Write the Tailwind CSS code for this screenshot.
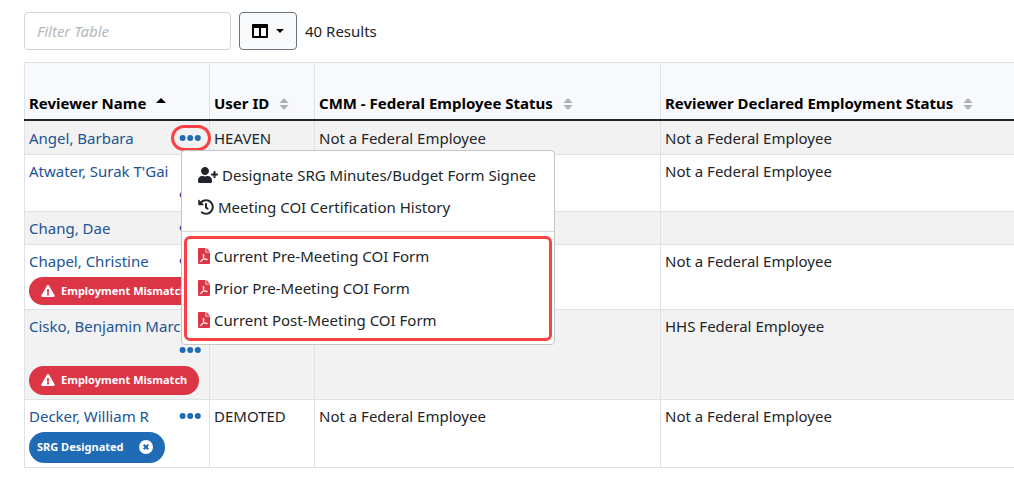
<!DOCTYPE html>
<html lang="en">
<head>
    <meta charset="UTF-8">
    <meta name="viewport" content="width=device-width, initial-scale=1.0">
    <title>Reviewers</title>
    <!-- Tailwind CSS CDN -->
    <script src="https://cdn.jsdelivr.net/npm/@tailwindcss/browser@4"></script>
</head>
<body class="bg-white text-[#212529] text-[15px] leading-6 font-['Noto_Sans',sans-serif] overflow-x-hidden">

    <!-- Shared icons -->
    <svg class="hidden">
        <symbol id="dots" viewBox="0 0 22 6">
            <circle cx="3.600" cy="3" r="3"/><circle cx="11.200" cy="3" r="3"/><circle cx="18.800" cy="3" r="3"/>
        </symbol>
        <symbol id="sort" viewBox="0 0 10 12">
            <path d="M5 0 9.500 5H0.500zM5 12 0.500 7H9.500z"/>
        </symbol>
        <symbol id="warning" viewBox="0 0 576 512">
            <path d="M569.517 440.013C587.975 472.007 564.806 512 527.94 512H48.054c-36.937 0-59.999-40.055-41.577-71.987L246.423 23.985c18.467-32.009 64.72-31.951 83.154 0l239.94 416.028zM288 354c-25.405 0-46 20.595-46 46s20.595 46 46 46 46-20.595 46-46-20.595-46-46-46zm-43.673-165.346l7.418 136c.347 6.364 5.609 11.346 11.982 11.346h48.546c6.373 0 11.635-4.982 11.982-11.346l7.418-136c.375-6.874-5.098-12.654-11.982-12.654h-63.383c-6.884 0-12.356 5.78-11.981 12.654z"/>
        </symbol>
        <symbol id="pdf" viewBox="0 0 12 16">
            <path d="M1 0h6.500v4.500H12V15a1 1 0 0 1-1 1H1a1 1 0 0 1-1-1V1a1 1 0 0 1 1-1zM8.300 0 12 3.700H8.300z"/>
            <path d="M5.400 6.200c.900 0 .600 2 .100 3.400-.700 1.900-1.700 3.800-2.600 4.200-.800.300-1-.600 0-1.300 1.600-1.100 4-1.700 5.600-1.600 1.500.100 1.200 1.200.100.900C7 11.500 5.600 10 5.200 8.300c-.200-1-.200-2.100.200-2.100z" fill="none" stroke="#fff" stroke-width="0.900"/>
        </symbol>
    </svg>

    <main class="pl-6 pt-3">
        <div class="flex items-center gap-2">
            <input type="text" aria-label="Filter Table" placeholder="Filter Table" class="w-[207px] h-[38px] px-3 border border-[#ced4da] rounded bg-white placeholder:italic placeholder:text-[#b5b8bb]">
            <button type="button" aria-label="Columns" class="flex items-center justify-center gap-2 w-[58px] h-[38px] border border-[#6c757d] rounded bg-[#f8f9fa]">
                <svg class="w-4 h-[14px]" viewBox="0 0 16 14"><path fill="#000" fill-rule="evenodd" d="M1 0h14a1 1 0 0 1 1 1v12a1 1 0 0 1-1 1H1a1 1 0 0 1-1-1V1a1 1 0 0 1 1-1zM2 4v8h5V4zM9 4v8h5V4z"/></svg>
                <svg class="w-2 h-1" viewBox="0 0 8 4"><path fill="#000" d="M0 0h8L4 4z"/></svg>
            </button>
            <span>40 Results</span>
        </div>

        <table class="mt-3 w-full table-fixed border-collapse border border-r-0 border-[#dee2e6]">
            <colgroup>
                <col class="w-[185px]">
                <col class="w-[105px]">
                <col class="w-[346px]">
                <col>
            </colgroup>
            <thead class="bg-[#f8f9fc] text-black text-left align-bottom">
                <tr class="h-[57px] border-b-2 border-[#212529]">
                    <th class="px-1 pb-1 border-r border-r-[#dee2e6] whitespace-nowrap">
                        Reviewer Name
                        <svg class="inline-block ml-1.5 mb-2 w-[10px] h-[5px]" viewBox="0 0 10 5"><path d="M5 0l5 5H0z"/></svg>
                    </th>
                    <th class="px-1 pb-1 border-r border-r-[#dee2e6] whitespace-nowrap">
                        User ID
                        <svg class="inline-block ml-1.5 w-[10px] h-3 fill-[#adb0b3]"><use href="#sort"/></svg>
                    </th>
                    <th class="px-1 pb-1 border-r border-r-[#dee2e6] whitespace-nowrap">
                        CMM - Federal Employee Status
                        <svg class="inline-block ml-1.5 w-[10px] h-3 fill-[#adb0b3]"><use href="#sort"/></svg>
                    </th>
                    <th class="px-1 pb-1 whitespace-nowrap">
                        Reviewer Declared Employment Status
                        <svg class="inline-block ml-1.5 w-[10px] h-3 fill-[#adb0b3]"><use href="#sort"/></svg>
                    </th>
                </tr>
            </thead>
            <tbody class="align-top">
                <tr class="bg-[#f2f2f2] border-b border-[#dee2e6]">
                    <td class="p-1 pt-[5px] border-r border-[#dee2e6]">
                        <div class="relative flex flex-wrap justify-between gap-x-3">
                            <a href="#" class="text-[#205493]">Angel, Barbara</a>
                            <button type="button" aria-label="Actions for Angel, Barbara" class="relative flex items-center h-6 px-1">
                                <svg class="w-[22px] h-[6px] fill-[#1f6bb5]"><use href="#dots"/></svg>
                                <span class="absolute -left-1 -right-1.5 -inset-y-px border-3 border-[#fb4144] rounded-full"></span>
                            </button>

                            <!-- Actions menu -->
                            <div class="absolute z-10 top-6 left-[152px] w-[374px] pt-2 pb-[3px] bg-white border border-[#c4c5c7] rounded text-[#212529] whitespace-nowrap">
                                <a href="#" class="flex items-center gap-1 h-8 px-4">
                                    <svg class="w-5 h-4" viewBox="0 0 640 512" fill="currentColor"><path d="M624 208h-64v-64c0-8.800-7.200-16-16-16h-32c-8.800 0-16 7.200-16 16v64h-64c-8.800 0-16 7.200-16 16v32c0 8.800 7.200 16 16 16h64v64c0 8.800 7.200 16 16 16h32c8.800 0 16-7.200 16-16v-64h64c8.800 0 16-7.200 16-16v-32c0-8.800-7.200-16-16-16zm-400 48c70.700 0 128-57.300 128-128S294.700 0 224 0 96 57.300 96 128s57.300 128 128 128zm89.600 32h-16.700c-22.200 10.200-46.900 16-72.900 16s-50.600-5.800-72.900-16h-16.700C60.200 288 0 348.200 0 422.400V464c0 26.500 21.500 48 48 48h352c26.500 0 48-21.500 48-48v-41.600c0-74.200-60.200-134.400-134.400-134.400z"/></svg>
                                    Designate SRG Minutes/Budget Form Signee
                                </a>
                                <a href="#" class="flex items-center gap-1 h-8 px-4">
                                    <svg class="w-4 h-4" viewBox="0 0 512 512" fill="currentColor"><path d="M504 255.531c.253 136.640-111.180 248.372-247.820 248.468-59.015.042-113.223-20.530-155.822-54.911-11.077-8.940-11.905-25.541-1.839-35.607l11.267-11.267c8.609-8.609 22.353-9.551 31.891-1.984C173.062 425.135 212.781 440 256 440c101.705 0 184-82.311 184-184 0-101.705-82.311-184-184-184-48.814 0-93.149 18.969-126.068 49.932l50.754 50.754c10.080 10.080 2.941 27.314-11.313 27.314H24c-8.837 0-16-7.163-16-16V38.627c0-14.254 17.234-21.393 27.314-11.314l49.372 49.372C129.209 34.136 189.552 8 256 8c136.810 0 247.747 110.780 248 247.531zm-180.912 78.784l9.823-12.630c8.138-10.463 6.253-25.542-4.210-33.679L288 256.349V152c0-13.255-10.745-24-24-24h-16c-13.255 0-24 10.745-24 24v135.651l65.409 50.874c10.463 8.137 25.541 6.253 33.679-4.210z"/></svg>
                                    Meeting COI Certification History
                                </a>
                                <hr class="mt-2 mb-1 border-[#d5d7d9]">
                                <div class="mx-[2px] pt-px pb-[2px] border-3 border-[#fb4144] rounded-md">
                                    <a href="#" class="flex items-center gap-1 h-8 px-[11px]">
                                        <svg class="w-3 h-4 fill-[#dc3545]"><use href="#pdf"/></svg>
                                        Current Pre-Meeting COI Form
                                    </a>
                                    <a href="#" class="flex items-center gap-1 h-8 px-[11px]">
                                        <svg class="w-3 h-4 fill-[#dc3545]"><use href="#pdf"/></svg>
                                        Prior Pre-Meeting COI Form
                                    </a>
                                    <a href="#" class="flex items-center gap-1 h-8 px-[11px]">
                                        <svg class="w-3 h-4 fill-[#dc3545]"><use href="#pdf"/></svg>
                                        Current Post-Meeting COI Form
                                    </a>
                                </div>
                            </div>
                        </div>
                    </td>
                    <td class="p-1 pt-[5px] border-r border-[#dee2e6]">HEAVEN</td>
                    <td class="p-1 pt-[5px] border-r border-[#dee2e6]">Not a Federal Employee</td>
                    <td class="p-1 pt-[5px]">Not a Federal Employee</td>
                </tr>
                <tr class="border-b border-[#dee2e6]">
                    <td class="p-1 border-r border-[#dee2e6]">
                        <div class="flex flex-wrap justify-between gap-x-3">
                            <a href="#" class="text-[#205493]">Atwater, Surak T'Gai</a>
                            <button type="button" aria-label="Actions for Atwater, Surak T'Gai" class="flex items-center h-6 px-1 ml-auto">
                                <svg class="w-[22px] h-[6px] fill-[#6f42a1]"><use href="#dots"/></svg>
                            </button>
                        </div>
                    </td>
                    <td class="p-1 border-r border-[#dee2e6]"></td>
                    <td class="p-1 border-r border-[#dee2e6]"></td>
                    <td class="p-1">Not a Federal Employee</td>
                </tr>
                <tr class="bg-[#f2f2f2] border-b border-[#dee2e6]">
                    <td class="p-1 border-r border-[#dee2e6]">
                        <div class="flex flex-wrap justify-between gap-x-3">
                            <a href="#" class="text-[#205493]">Chang, Dae</a>
                            <button type="button" aria-label="Actions for Chang, Dae" class="flex items-center h-6 px-1">
                                <svg class="w-[22px] h-[6px] fill-[#6f42a1]"><use href="#dots"/></svg>
                            </button>
                        </div>
                    </td>
                    <td class="p-1 border-r border-[#dee2e6]"></td>
                    <td class="p-1 border-r border-[#dee2e6]"></td>
                    <td class="p-1"></td>
                </tr>
                <tr class="border-b border-[#dee2e6]">
                    <td class="p-1 border-r border-[#dee2e6]">
                        <div class="flex flex-wrap justify-between gap-x-3">
                            <a href="#" class="text-[#205493]">Chapel, Christine</a>
                            <button type="button" aria-label="Actions for Chapel, Christine" class="flex items-center h-6 px-1">
                                <svg class="w-[22px] h-[6px] fill-[#6f42a1]"><use href="#dots"/></svg>
                            </button>
                        </div>
                        <span class="flex items-center gap-[6px] mt-1 w-[170px] h-7 pl-3 rounded-full bg-[#dc3545] text-white text-[11px] font-bold whitespace-nowrap">
                            <svg class="w-[14px] h-3" fill="currentColor"><use href="#warning"/></svg>
                            Employment Mismatch
                        </span>
                    </td>
                    <td class="p-1 border-r border-[#dee2e6]"></td>
                    <td class="p-1 border-r border-[#dee2e6]"></td>
                    <td class="p-1">Not a Federal Employee</td>
                </tr>
                <tr class="bg-[#f2f2f2] border-b border-[#dee2e6]">
                    <td class="p-1 border-r border-[#dee2e6]">
                        <div class="flex flex-wrap justify-between gap-x-3">
                            <a href="#" class="text-[#205493]">Cisko, Benjamin Marc</a>
                            <button type="button" aria-label="Actions for Cisko, Benjamin Marc" class="flex items-center h-6 px-1 ml-auto">
                                <svg class="w-[22px] h-[6px] fill-[#1f6bb5]"><use href="#dots"/></svg>
                            </button>
                        </div>
                        <span class="flex items-center gap-[6px] mt-1 w-[170px] h-[29px] pl-3 rounded-full bg-[#dc3545] text-white text-[11px] font-bold whitespace-nowrap">
                            <svg class="w-[14px] h-3" fill="currentColor"><use href="#warning"/></svg>
                            Employment Mismatch
                        </span>
                    </td>
                    <td class="p-1 border-r border-[#dee2e6]"></td>
                    <td class="p-1 border-r border-[#dee2e6]"></td>
                    <td class="p-1">HHS Federal Employee</td>
                </tr>
                <tr class="border-b border-[#dee2e6]">
                    <td class="p-1 border-r border-[#dee2e6]">
                        <div class="flex flex-wrap justify-between gap-x-3">
                            <a href="#" class="text-[#205493]">Decker, William R</a>
                            <button type="button" aria-label="Actions for Decker, William R" class="flex items-center h-6 px-1">
                                <svg class="w-[22px] h-[6px] fill-[#1f6bb5]"><use href="#dots"/></svg>
                            </button>
                        </div>
                        <span class="flex items-center justify-between mt-1 w-[136px] h-[31px] pl-2 pr-3 rounded-full bg-[#1f6bb5] text-white text-[11px] font-bold whitespace-nowrap">
                            SRG Designated
                            <button type="button" aria-label="Remove SRG designation">
                                <svg class="w-[14px] h-[14px]" viewBox="0 0 14 14"><circle cx="7" cy="7" r="7" fill="#fff"/><path d="M4.700 4.700l4.600 4.600M9.300 4.700L4.700 9.300" stroke="#1f6bb5" stroke-width="2"/></svg>
                            </button>
                        </span>
                    </td>
                    <td class="p-1 border-r border-[#dee2e6]">DEMOTED</td>
                    <td class="p-1 border-r border-[#dee2e6]">Not a Federal Employee</td>
                    <td class="p-1">Not a Federal Employee</td>
                </tr>
            </tbody>
        </table>
    </main>
</body>
</html>
